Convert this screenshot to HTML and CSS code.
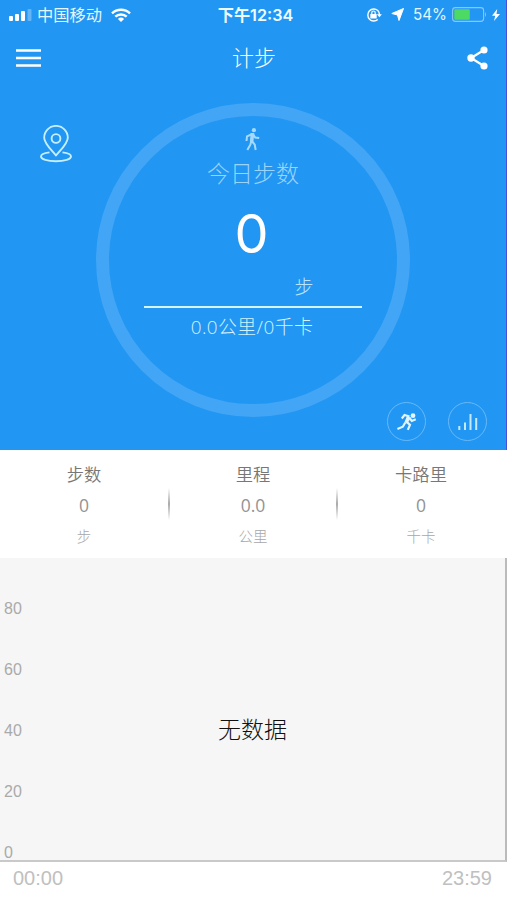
FILE: index.html
```html
<!DOCTYPE html>
<html lang="zh-CN">
<head>
<meta charset="utf-8">
<meta name="viewport" content="width=device-width, initial-scale=1">
<title>计步</title>
<link rel="stylesheet" href="styles.css">
</head>
<body>
<main class="app">
  <section class="hero">
    <div class="status">
      <div class="status-left">
        <svg class="signal" width="23" height="12" viewBox="0 0 23 12"><rect x="0" y="7" width="4" height="5" rx="1"/><rect x="6" y="5" width="4" height="7" rx="1"/><rect x="12" y="2" width="4" height="10" rx="1"/><rect x="18.500" y="0" width="4" height="12" rx="1" opacity=".3"/></svg>
        <span class="carrier">中国移动</span>
        <svg class="wifi" width="20" height="14" viewBox="0 0 20 14"><g fill="none" stroke="#fff" stroke-width="2.400"><path d="M1 5.300a13 13 0 0 1 18 0"/><path d="M4.300 8.700a8.300 8.300 0 0 1 11.400 0"/></g><path d="M6.900 10.900a4.600 4.600 0 0 1 6.200 0L10 14z"/></svg>
      </div>
      <div class="time">下午12:34</div>
      <div class="status-right">
        <svg width="16" height="14" viewBox="0 0 16 14"><path d="M11.800 2.500A6 6 0 1 0 11.800 11.500M11.800 2.500Q13.500 4.300 13.500 7" fill="none" stroke="#fff" stroke-width="1.400"/><path d="M10.900 6.300h5l-2.500 3z"/><rect x="4.300" y="6" width="6.400" height="4.500" rx=".6"/><path d="M5.800 6V4.700a1.700 1.700 0 0 1 3.400 0V6" fill="none" stroke="#fff" stroke-width="1.200"/></svg>
        <svg class="arrow" width="13" height="13" viewBox="0 0 13 13"><path d="M12.500.5L8 12.500 6.500 7 .8 5.500z" stroke="#fff" stroke-width="1" stroke-linejoin="round"/></svg>
        <span class="percent">54%</span>
        <svg class="battery" width="35" height="15" viewBox="0 0 35 15"><rect x=".6" y=".6" width="31" height="13.800" rx="2.800" fill="none" stroke="#8ac6fa" stroke-width="1.100"/><rect x="2.300" y="2.200" width="15.500" height="10.600" rx="1" fill="#4cd964"/><path d="M33 5q2 2.500 0 5z" fill="#8ac6fa"/></svg>
        <svg class="bolt" width="8" height="12" viewBox="0 0 8 12"><path d="M5.200 0L0 6.700h3.200L2 12l6-7H4.500z"/></svg>
      </div>
    </div>
    <header class="nav">
      <svg width="25" height="18" viewBox="0 0 25 18"><path d="M0 1.500h25M0 9h25M0 16.500h25" stroke="#fff" stroke-width="2.600"/></svg>
      <h1>计步</h1>
      <svg width="21" height="24" viewBox="0 0 21 24"><path d="M17 4L4 12l13 8" fill="none" stroke="#fff" stroke-width="2.200"/><circle cx="17" cy="4" r="3.600"/><circle cx="4" cy="12" r="3.700"/><circle cx="17" cy="20" r="3.600"/></svg>
    </header>
    <div class="stage">
      <svg class="pin" width="32" height="38" viewBox="0 0 32 38"><path d="M16 30.500C11.500 25 4.200 18.500 4.200 12.700a11.800 11.800 0 0 1 23.600 0C27.800 18.500 20.500 25 16 30.500z"/><circle cx="16" cy="13.500" r="4.400"/><path d="M9.500 27.400C4.500 28 1 29.500 1 31.400c0 2.700 6.500 4.800 15 4.800s15-2.100 15-4.800c0-1.900-3.500-3.400-8.500-4"/></svg>
      <div class="dial">
        <svg class="walker" width="15" height="23" viewBox="0 0 15 23"><circle cx="8.900" cy="2.200" r="2.100"/><path d="M7.300 6L2 8.400 1.500 13M8.300 6.500L10.200 9.600 14.200 10M6.300 12.500L5.500 16.500 2.300 22M6.700 13l3 3.500L10.700 22" fill="none" stroke="#a5dafc" stroke-width="2"/><path d="M5.600 5h3.700l-.9 9H4.900z"/></svg>
        <div class="dial-label">今日步数</div>
        <div class="count">0</div>
        <div class="unit">步</div>
        <div class="summary">0.0公里/0千卡</div>
      </div>
      <div class="actions">
        <div class="round"><svg width="20" height="18" viewBox="0 0 20 18"><circle cx="16" cy="2.700" r="2.400"/><path d="M4.800 5.500L7.500 2l5 1.500M9.300 8.500l3.700 3.400-2.200 5M8.300 9.500l-2.500 4.200L.4 16M12.600 5l2.200 2.900 4-1.700" fill="none" stroke="#dff5ff" stroke-width="2.200"/><path d="M10 3l4 1.700-3.800 6L7.500 9z"/></svg></div>
        <div class="round"><svg width="20" height="18" viewBox="0 0 20 18"><path d="M1.300 17v-4M7 17v-7.500M12.500 17V1M18.200 17V5" stroke="#c5eaff" stroke-width="2"/></svg></div>
      </div>
    </div>
  </section>
  <section class="stats">
    <div class="stat"><span class="name">步数</span><span class="value">0</span><span class="measure">步</span></div>
    <i class="divider"></i>
    <div class="stat"><span class="name">里程</span><span class="value">0.0</span><span class="measure">公里</span></div>
    <i class="divider"></i>
    <div class="stat"><span class="name">卡路里</span><span class="value">0</span><span class="measure">千卡</span></div>
  </section>
  <section class="chart">
    <div class="scale"><span>80</span><span>60</span><span>40</span><span>20</span><span>0</span></div>
    <div class="empty">无数据</div>
  </section>
  <footer class="hours"><span>00:00</span><span>23:59</span></footer>
</main>
</body>
</html>
```
FILE: styles.css
```css
* { box-sizing: border-box; }
body { margin: 0; background: #fff; font-family: "Noto Sans CJK SC", sans-serif; font-weight: 300; }
svg { display: block; flex: none; fill: #fff; }
.app { width: 507px; height: 900px; display: grid; grid-template-rows: 450px 108px 304px 38px; overflow: hidden; }
.hero { background: #2196f3; color: #fff; border-right: 1px solid #4a50d5; display: grid; grid-template-rows: 30px 55px 365px; }
.status { display: grid; grid-template-columns: 1fr auto 1fr; align-items: center; padding: 0 6px 0 9px; }
.status-left, .status-right { display: flex; align-items: center; }
.status-right { justify-content: flex-end; }
.carrier { margin: -2px 9px 0 5px; font-size: 16.300px; line-height: 24px; font-weight: 400; color: #e3f7ff; }
.wifi { margin-top: -1px; }
.time { margin: -1px 0 0 2px; font: 600 16.200px/24px Inter, "Noto Sans CJK SC", sans-serif; color: #effaff; }
.arrow { margin: -1px 0 0 9px; }
.percent { margin: 0 5px 0 9px; font: 400 15.200px/24px Inter, sans-serif; color: #e3f7ff; }
.battery { margin-top: -1px; }
.bolt { margin: -1px 0 0 5px; }
.nav { display: flex; align-items: center; justify-content: space-between; padding: 0 18px 0 16px; }
.nav h1 { margin: -4px 0 0; font-size: 22px; line-height: 32px; font-weight: 300; }
.stage { display: grid; }
.stage > * { grid-area: 1 / 1; }
.pin { margin: 40px 0 0 40px; fill: none; stroke: #c5efff; stroke-width: 1.900; stroke-linejoin: round; }
.dial { width: 314px; height: 314px; margin: 18px 0 0 96px; border: 13px solid #42a5f5; border-radius: 50%; display: flex; flex-direction: column; align-items: center; }
.walker { margin: 12px 2px 0 0; fill: #a5dafc; }
.dial-label { margin-top: 4px; font-size: 23px; line-height: 34px; color: #9bd4fb; }
.count { margin: 6px 3px 0 0; font: 400 54px/78px Inter, sans-serif; }
.unit { width: 218px; height: 35px; margin-right: 1px; padding-right: 48px; text-align: right; font-size: 19px; line-height: 25px; color: #b9e5ff; border-bottom: 2px solid #d2f6ff; }
.summary { margin: 5px 2px 0 0; font: 300 18.900px/28px "Open Sans", "Noto Sans CJK SC", sans-serif; letter-spacing: .4px; color: #d2f3ff; }
.actions { display: flex; gap: 22px; align-self: end; justify-self: end; margin: 0 19px 9px 0; }
.round { width: 39px; height: 39px; border: 1px solid #68b9f8; border-radius: 50%; display: grid; place-items: center; }
.round svg { fill: #dff5ff; }
.stats { display: grid; grid-template-columns: 168px 2px 166px 2px 166px; color: #777; }
.stat { display: flex; flex-direction: column; align-items: center; }
.name { margin-top: 10px; font-size: 17.300px; line-height: 28px; font-weight: 350; }
.value { margin-top: 4px; font: 400 17.500px/26px "Open Sans", sans-serif; color: #939393; }
.measure { margin-top: 5px; font-size: 14.500px; line-height: 26px; color: #a8a8a8; }
.divider { height: 32px; margin-top: 38px; background: linear-gradient(transparent, #aaa 50%, transparent); }
.chart { background: #f6f6f6; border-right: 2px solid #bbb; border-bottom: 2px solid #c9c9c9; display: grid; }
.chart > * { grid-area: 1 / 1; }
.scale { padding: 20px 0 0 4px; display: flex; flex-direction: column; overflow: hidden; color: #aaa; font: 400 16px/61px "Liberation Sans", sans-serif; }
.scale span { height: 61px; flex: none; }
.empty { place-self: center; color: #111; font-size: 23px; line-height: 34px; font-weight: 300; margin-top: 38px; }
.hours { display: flex; justify-content: space-between; padding: 0 15px 0 13px; font: 400 20px/32px "Liberation Sans", sans-serif; color: #c0c0c0; }
```
